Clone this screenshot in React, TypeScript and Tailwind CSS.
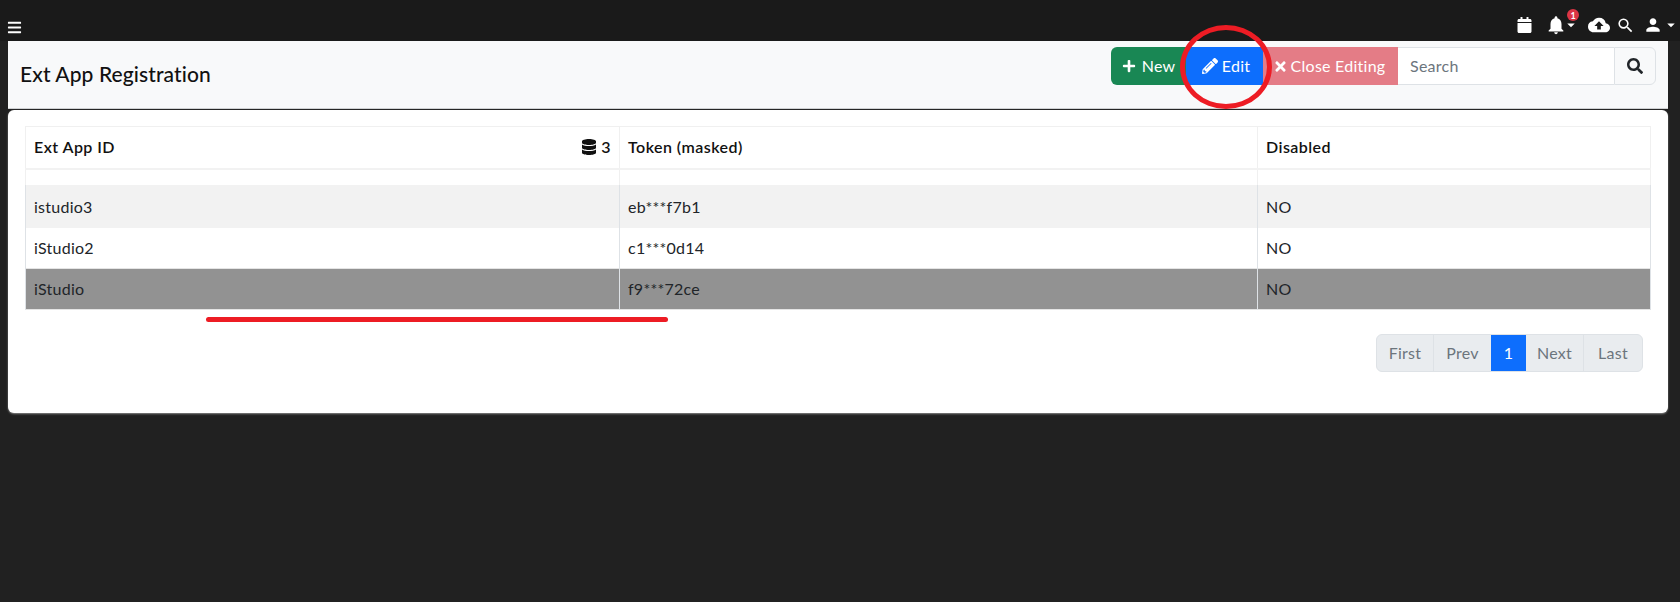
import { FaBars, FaCalendar, FaDatabase, FaPencilAlt, FaPlus, FaSearch, FaTimes } from "react-icons/fa";
import { MdCloudUpload, MdNotifications, MdPerson, MdSearch, MdArrowDropDown } from "react-icons/md";

const rows = [
  { id: "istudio3", token: "eb***f7b1", disabled: "NO", cls: "bg-[#f2f2f2] h-[43px] border-[#f2f2f2]", text: "pt-[2px]" },
  { id: "iStudio2", token: "c1***0d14", disabled: "NO", cls: "bg-white h-[41px] border-[#e4e4e4]", text: "" },
  { id: "iStudio", token: "f9***72ce", disabled: "NO", cls: "bg-[#929292] h-[41px] border-[#e4e4e4]", text: "" },
];

const pages = [
  { label: "First", cls: "w-[57px] rounded-l-md border-r border-[#dee2e6]" },
  { label: "Prev", cls: "w-[57px]" },
  { label: "1", cls: "w-[35px] bg-[#0d6efd] text-white" },
  { label: "Next", cls: "w-[58px] border-r border-[#dee2e6]" },
  { label: "Last", cls: "w-[58px] rounded-r-md" },
];

export default function App() {
  return (
    <div className="relative h-[602px] w-[1680px] overflow-hidden bg-[#212121] font-['Lato','Noto_Sans',sans-serif] text-[16px] tracking-[0.25px] text-[#212529]">
      {/* top nav */}
      <div className="flex h-[41px] items-end justify-between bg-[#1a1a1a] pb-[5px] pl-[7px] pr-0 text-white">
        <FaBars className="mb-[1px] h-[15px] w-[15px]" />
        <div className="flex items-center">
          <FaCalendar className="mr-[13px] h-[16px] w-[15px]" />
          <div className="relative mr-[3px] flex items-center">
            <MdNotifications className="h-[22px] w-[22px]" />
            <MdArrowDropDown className="-ml-[5px] h-[18px] w-[18px]" />
            <span className="absolute -top-[5px] left-[22px] flex h-[12px] w-[12px] items-center justify-center rounded-full bg-[#dc3545] text-[9px] font-bold leading-none tracking-normal">
              1
            </span>
          </div>
          <MdCloudUpload className="ml-[5px] mr-[6px] h-[22px] w-[22px]" />
          <MdSearch className="mr-[8px] h-[19px] w-[19px]" />
          <MdPerson className="h-[20px] w-[20px]" />
          <MdArrowDropDown className="-ml-[1px] h-[18px] w-[18px]" />
        </div>
      </div>

      {/* title bar */}
      <div className="ml-2 mr-3 flex h-[68px] items-start justify-between border-b border-[#cfd1d3] bg-[#f8f9fa] pl-3 pr-3">
        <h1 className="mt-[21px] text-[21px] font-medium leading-6 tracking-[0.1px] text-[#111]">Ext App Registration</h1>
        <div className="mt-[6px] flex h-[38px]">
          <button className="flex w-[75px] items-center justify-center gap-[6px] rounded-l-md bg-[#198754] text-white">
            <FaPlus className="h-[14px] w-[14px]" /> New
          </button>
          <button className="flex w-[77px] items-center justify-center gap-1 bg-[#0d6efd] pl-[3px] text-white">
            <FaPencilAlt className="h-[16px] w-[16px]" /> Edit
          </button>
          <button className="flex w-[135px] items-center justify-center gap-[3px] bg-[#e47c86] pr-[3px] text-white">
            <FaTimes className="h-[15px] w-[15px]" /> Close Editing
          </button>
          <input
            className="h-[38px] w-[216px] border-y border-[#dee2e6] bg-white px-3 pb-[1px] outline-none placeholder:text-[#6c757d]"
            placeholder="Search"
          />
          <button className="flex w-[42px] items-center justify-center rounded-r-md border border-[#dee2e6] bg-[#f8f9fa] text-[#212529]">
            <FaSearch className="h-[16px] w-[16px]" />
          </button>
        </div>
      </div>

      {/* card */}
      <div className="ml-2 mr-3 mt-[1px] h-[303px] rounded-md bg-white pl-[17px] pt-4 shadow-[0_1px_2px_#888]">
        <table className="w-[1625px] table-fixed border-collapse text-left">
          <colgroup>
            <col className="w-[594px]" />
            <col className="w-[638px]" />
            <col className="w-[393px]" />
          </colgroup>
          <thead>
            <tr className="h-[42px] border-b-2 border-[#f2f2f2] text-[#111]">
              <th className="border border-[#f0f0f0] px-2 font-semibold tracking-[0.45px]">
                <div className="flex items-center justify-between">
                  <span>Ext App ID</span>
                  <span className="flex items-center gap-1">
                    <FaDatabase className="h-[16px] w-[16px]" /> 3
                  </span>
                </div>
              </th>
              <th className="border border-[#f0f0f0] px-2 font-semibold tracking-[0.45px]">Token (masked)</th>
              <th className="border border-[#f0f0f0] px-2 font-semibold tracking-[0.45px]">Disabled</th>
            </tr>
            <tr className="h-[16px]">
              <td className="border-x border-[#f0f0f0]" />
              <td className="border-x border-[#f0f0f0]" />
              <td className="border-x border-[#f0f0f0]" />
            </tr>
          </thead>
          <tbody>
            {rows.map((row) => (
              <tr key={row.id} className={row.cls + " border-b"}>
                <td className={"border-x border-[#dee2e6] px-2 " + row.text}>{row.id}</td>
                <td className={"border-x border-[#dee2e6] px-2 " + row.text}>{row.token}</td>
                <td className={"border-x border-[#dee2e6] px-2 " + row.text}>{row.disabled}</td>
              </tr>
            ))}
          </tbody>
        </table>

        <div className="mt-[24px] flex w-[1618px] justify-end">
          <div className="flex h-[38px] rounded-md border border-[#dee2e6] bg-[#e9ecef] text-[#6c757d]">
            {pages.map((p) => (
              <span key={p.label} className={"flex items-center justify-center " + p.cls}>
                {p.label}
              </span>
            ))}
          </div>
        </div>
      </div>

      {/* hand-drawn annotations on the screenshot */}
      <div className="absolute left-[1180px] top-[25px] h-[84px] w-[92px] rounded-[50%] border-[5px] border-[#ed1c24]" />
      <div className="absolute left-[206px] top-[317px] h-[5px] w-[462px] rounded-full bg-[#ed1c24]" />
    </div>
  );
}
